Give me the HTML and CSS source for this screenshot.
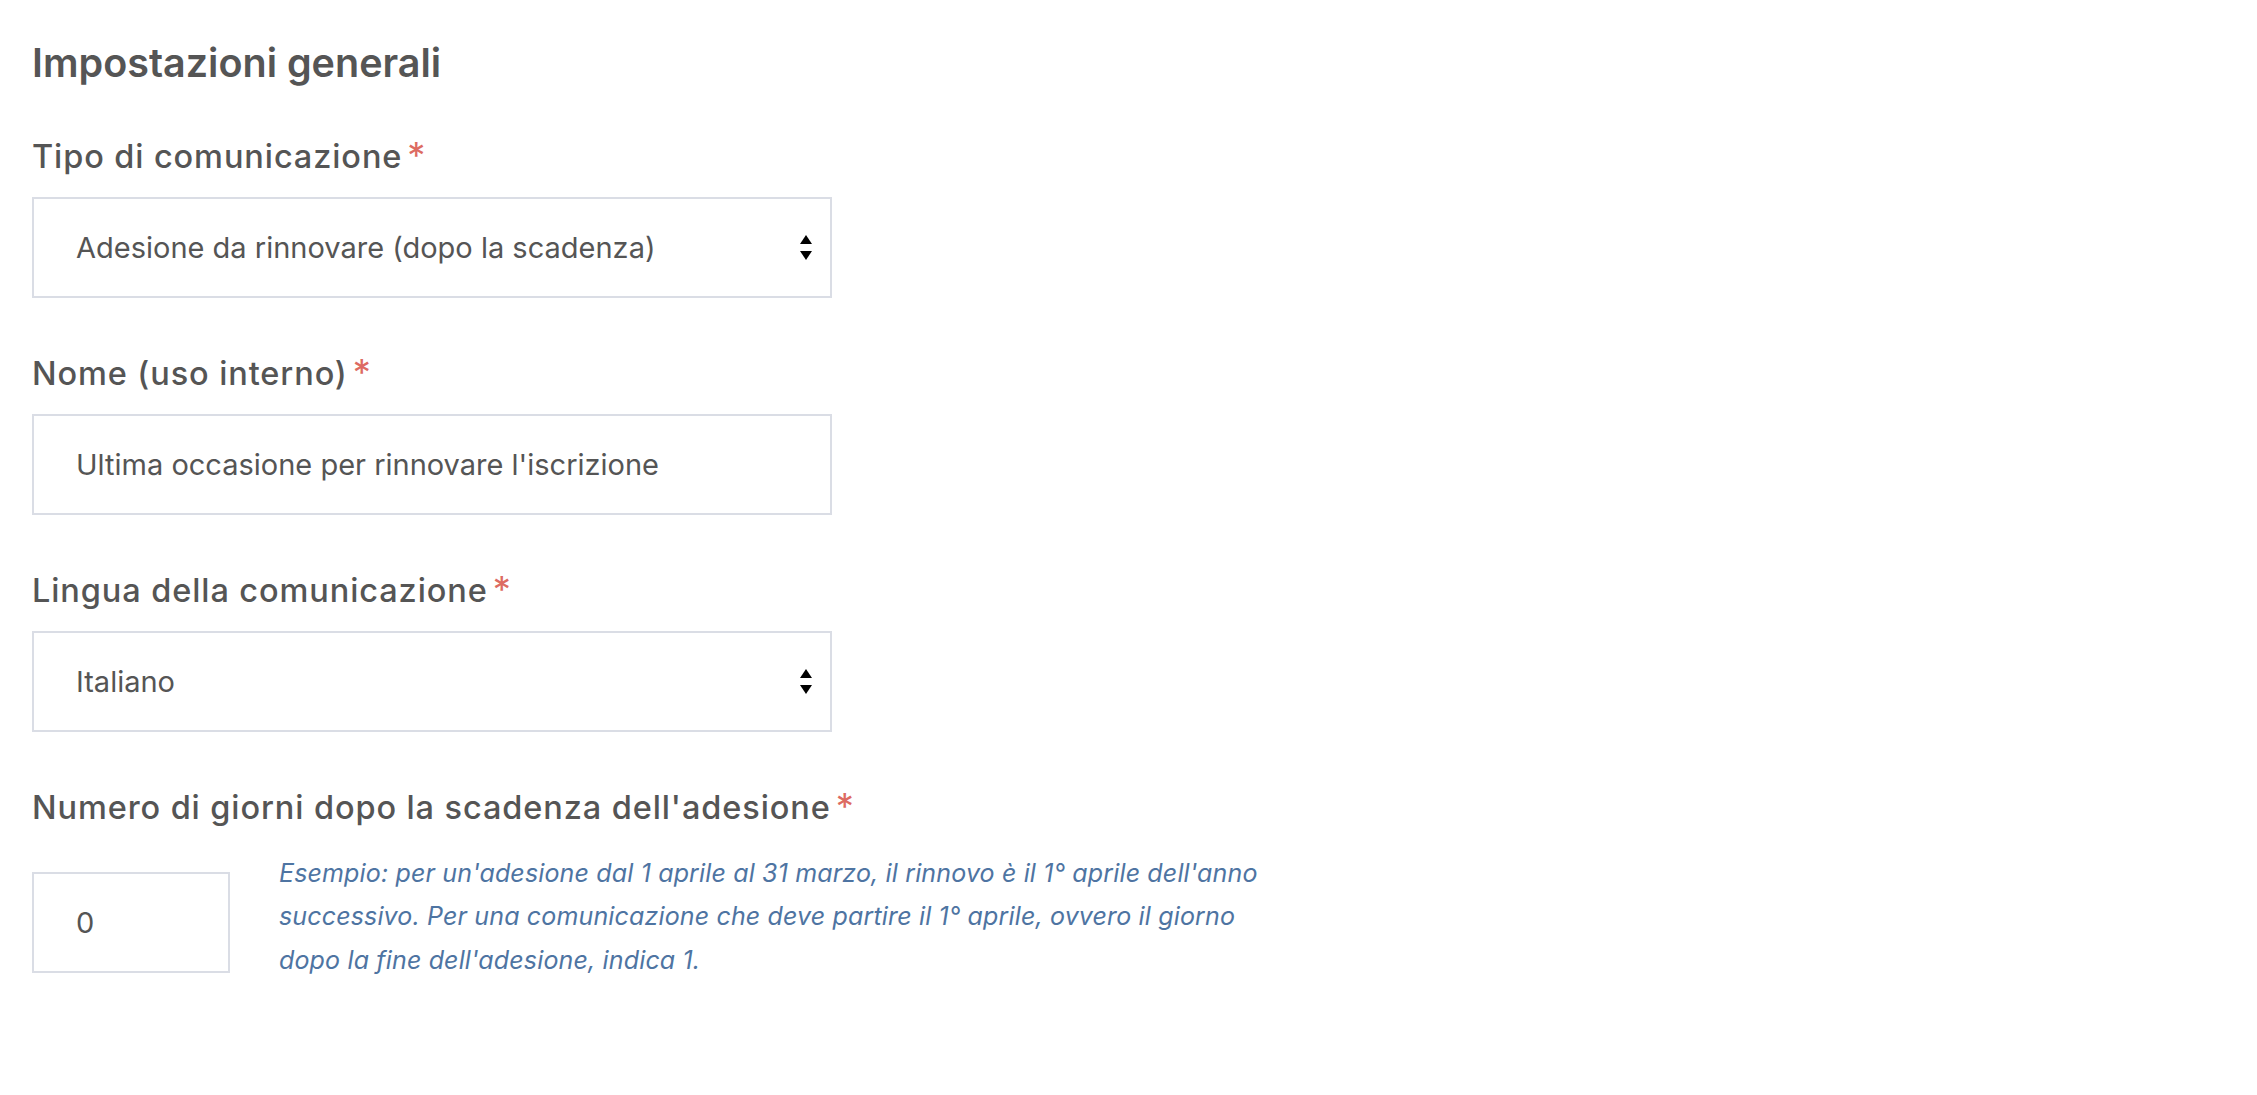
FILE: index.html
```html
<!DOCTYPE html>
<html lang="it">
<head>
<meta charset="utf-8">
<title>Impostazioni generali</title>
<link rel="stylesheet" href="styles.css">
</head>
<body>
<main class="page">
  <h2 class="title">Impostazioni generali</h2>

  <div class="group">
    <label class="label">Tipo di comunicazione<span class="req">*</span></label>
    <div class="field select">
      <span class="value">Adesione da rinnovare (dopo la scadenza)</span>
      <svg class="arrows" width="12" height="25" viewBox="0 0 12 25" aria-hidden="true">
        <path d="M6 0 L12 9 L0 9 Z" fill="#000"/>
        <path d="M0 16 L12 16 L6 25 Z" fill="#000"/>
      </svg>
    </div>
  </div>

  <div class="group">
    <label class="label">Nome (uso interno)<span class="req">*</span></label>
    <div class="field">
      <span class="value">Ultima occasione per rinnovare l'iscrizione</span>
    </div>
  </div>

  <div class="group">
    <label class="label">Lingua della comunicazione<span class="req">*</span></label>
    <div class="field select">
      <span class="value">Italiano</span>
      <svg class="arrows" width="12" height="25" viewBox="0 0 12 25" aria-hidden="true">
        <path d="M6 0 L12 9 L0 9 Z" fill="#000"/>
        <path d="M0 16 L12 16 L6 25 Z" fill="#000"/>
      </svg>
    </div>
  </div>

  <div class="group last">
    <label class="label">Numero di giorni dopo la scadenza dell'adesione<span class="req">*</span></label>
    <div class="row">
      <div class="field number">
        <span class="value">0</span>
      </div>
      <p class="help">Esempio: per un'adesione dal 1 aprile al 31 marzo, il rinnovo è il 1° aprile dell'anno<br>successivo. Per una comunicazione che deve partire il 1° aprile, ovvero il giorno<br>dopo la fine dell'adesione, indica 1.</p>
    </div>
  </div>
</main>
</body>
</html>
```
FILE: styles.css
```css
* { box-sizing: border-box; }

html, body {
  margin: 0;
  background: #ffffff;
}

body {
  font-family: Inter, "Noto Sans", sans-serif;
  color: #555555;
}

.page {
  padding: 39px 0 0 32px;
}

.title {
  margin: 0 0 50px 0;
  font-size: 39.5px;
  line-height: 48px;
  font-weight: 600;
  color: #555555;
  letter-spacing: 0;
}

.group {
  margin-bottom: 56px;
}

.group.last {
  margin-bottom: 0;
}

.label {
  display: block;
  height: 40px;
  margin-bottom: 20px;
  font-size: 32.5px;
  line-height: 40px;
  font-weight: 500;
  letter-spacing: 0.9px;
  color: #555555;
}

.req {
  margin-left: 5px;
  font-weight: 400;
  font-size: 36px;
  line-height: 0;
  color: #dd6b62;
  letter-spacing: 0;
}

.field {
  display: flex;
  align-items: center;
  justify-content: space-between;
  width: 800px;
  height: 101px;
  padding: 0 18px 0 42px;
  border: 2px solid #dadde5;
  background: #ffffff;
}

.value {
  font-size: 29px;
  line-height: 36px;
  font-weight: 400;
  color: #555555;
}

.arrows {
  display: block;
  flex: none;
}

.row {
  display: flex;
  align-items: flex-start;
  margin-top: -20px;
}

.field.number {
  width: 198px;
  margin-top: 44px;
}

.help {
  margin: 24px 0 0 49px;
  font-size: 25px;
  line-height: 43.3px;
  font-style: italic;
  font-weight: 400;
  letter-spacing: 0.15px;
  color: #4e74a2;
  white-space: nowrap;
}
```
